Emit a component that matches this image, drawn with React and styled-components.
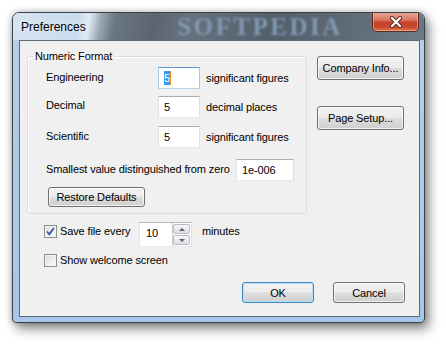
import React from "react";
import styled, { createGlobalStyle } from "styled-components";

const Global = createGlobalStyle`
  html, body {
    margin: 0;
    background: #ffffff;
  }
  body {
    font-family: "Liberation Sans", Arial, sans-serif;
    font-size: 11px;
    letter-spacing: -0.12px;
    color: #000;
  }
`;

const Page = styled.div`
  width: 446px;
  height: 344px;
  box-sizing: border-box;
  padding: 12px 0 0 12px;
  overflow: hidden;
`;

const Window = styled.div`
  width: 413px;
  height: 311px;
  box-sizing: border-box;
  border: 1px solid #3b4149;
  border-radius: 7px 7px 4px 4px;
  background: linear-gradient(180deg, #b9cfe6 0%, #acc9e8 60%, #a7c6e9 100%);
  box-shadow: 4px 6px 12px rgba(0, 0, 0, 0.45), 0 0 7px rgba(0, 0, 0, 0.25);
  display: flex;
  flex-direction: column;
  overflow: hidden;
`;

const TitleBar = styled.div`
  height: 27px;
  flex: none;
  display: flex;
  align-items: center;
  padding-left: 8px;
  background: linear-gradient(
    100deg,
    #d6e4f0 0px,
    #c8dbee 66px,
    #dfeaf4 76px,
    #9aa7b3 88px,
    #6a7681 102px,
    #5a6570 140px,
    #66727e 175px,
    #525e6a 260px,
    #5e6a76 330px,
    #6c7885 400px
  );
`;

const Title = styled.span`
  font-size: 12px;
  letter-spacing: 0;
  color: #000;
  text-shadow: 0 0 6px rgba(255, 255, 255, 0.9);
`;

const Watermark = styled.span`
  margin-left: auto;
  margin-right: 17px;
  width: 190px;
  text-align: center;
  font-family: "Liberation Serif", "Times New Roman", serif;
  font-weight: bold;
  font-size: 25px;
  line-height: 25px;
  letter-spacing: 2.5px;
  color: #8299b2;
  filter: blur(0.9px);
  white-space: nowrap;
`;

const CloseButton = styled.div`
  align-self: flex-start;
  margin-top: -1px;
  margin-right: 5px;
  width: 47px;
  height: 20px;
  box-sizing: border-box;
  border: 1px solid #5e2a22;
  border-top: none;
  border-radius: 0 0 5px 5px;
  background: linear-gradient(180deg, #e9a898 0%, #dc7a64 40%, #c8432c 55%, #c9482f 80%, #e07a52 100%);
  box-shadow: inset 0 0 0 1px rgba(255, 210, 200, 0.45);
  display: flex;
  align-items: center;
  justify-content: center;
`;

const Body = styled.div`
  flex: 1;
  display: flex;
  padding: 0 4px 5px 6px;
`;

const Client = styled.div`
  flex: 1;
  display: flex;
  flex-direction: column;
  background: #f0f0f0;
  border: 1px solid #5c6b79;
`;

const Main = styled.div`
  display: flex;
  gap: 10px;
  padding: 8px 15px 0 7px;
`;

const LeftColumn = styled.div`
  display: flex;
  flex-direction: column;
`;

const RightColumn = styled.div`
  display: flex;
  flex-direction: column;
  gap: 26px;
  padding-top: 7px;
`;

const Group = styled.fieldset`
  width: 280px;
  box-sizing: border-box;
  margin: 0;
  padding: 4px 0 6px 18px;
  border: 1px solid #d5dfe5;
  border-radius: 3px;
  box-shadow: inset 1px 1px 0 #ffffff;
  display: flex;
  flex-direction: column;
`;

const Legend = styled.legend`
  margin-left: -12px;
  padding: 0 1px;
  line-height: 14px;
`;

const Row = styled.div`
  display: flex;
  align-items: flex-start;
  height: 22px;
  margin-top: ${(p) => p.$mt || 0}px;
`;

const RowLabel = styled.span`
  width: ${(p) => p.$w}px;
  flex: none;
  padding-top: ${(p) => p.$dy}px;
  line-height: 13px;
`;

const Field = styled.div`
  width: ${(p) => p.$w}px;
  height: 22px;
  box-sizing: border-box;
  flex: none;
  background: #ffffff;
  border: 1px solid;
  border-color: ${(p) =>
    p.$focus ? "#5d95cf #a9c9e8 #b7d6ee #a9c9e8" : "#abadb3 #dbdfe6 #e3e9ef #e2e3ea"};
  padding-left: 5px;
  line-height: 20px;
`;

const Selected = styled.span`
  display: inline-block;
  background: #3399ff;
  color: #ffffff;
  line-height: 14px;
  border-right: 1px solid #f08a24;
`;

const Unit = styled.span`
  margin-left: 6px;
  line-height: 22px;
`;

const Button = styled.div`
  width: ${(p) => p.$w}px;
  height: ${(p) => p.$h}px;
  box-sizing: border-box;
  flex: none;
  border: 1px solid ${(p) => (p.$default ? "#3c86c4" : "#707070")};
  border-radius: 3px;
  background: linear-gradient(180deg, #f2f2f2 0%, #ebebeb 48%, #dddddd 52%, #cfcfcf 100%);
  box-shadow: inset 0 0 0 1px ${(p) => (p.$default ? "#b8e2f8" : "rgba(255, 255, 255, 0.75)")};
  display: flex;
  align-items: center;
  justify-content: center;
  color: #000;
`;

const RestoreButton = styled(Button)`
  margin: 6px 0 0 2px;
`;

const CheckRow = styled.div`
  display: flex;
  align-items: flex-start;
  margin: ${(p) => p.$mt}px 0 0 17px;
`;

const CheckLabel = styled.label`
  display: flex;
  align-items: center;
  gap: 3px;
  width: ${(p) => (p.$w ? `${p.$w}px` : "auto")};
  margin-top: ${(p) => p.$dy || 0}px;
  line-height: 13px;
`;

const Box = styled.span`
  width: 13px;
  height: 13px;
  box-sizing: border-box;
  flex: none;
  border: 1px solid #8e8f8f;
  background: linear-gradient(135deg, #dcdcdc 0%, #f0f0f0 60%, #fbfbfb 100%);
  box-shadow: inset 0 0 0 1px #f4f4f4;
  display: flex;
  align-items: center;
  justify-content: center;
`;

const Spin = styled.div`
  width: 53px;
  height: 25px;
  box-sizing: border-box;
  flex: none;
  display: flex;
  background: #ffffff;
  border: 1px solid;
  border-color: #b7b9be #dbdfe6 #e3e9ef #e2e3ea;
`;

const SpinText = styled.span`
  flex: 1;
  padding-left: 6px;
  line-height: 21px;
`;

const SpinButtons = styled.div`
  width: 17px;
  display: flex;
  flex-direction: column;
  gap: 1px;
  padding: 1px 1px 1px 0;
  border-left: 1px solid #c9ccd2;
`;

const SpinButton = styled.div`
  flex: 1;
  border: 1px solid #b9bcc3;
  border-radius: 2px;
  background: linear-gradient(180deg, #f7f7f7 0%, #ebebeb 50%, #dedede 100%);
  display: flex;
  align-items: center;
  justify-content: center;
`;

const Arrow = styled.span`
  width: 0;
  height: 0;
  border-left: 3px solid transparent;
  border-right: 3px solid transparent;
  ${(p) =>
    p.$up ? "border-bottom: 3px solid #4d6185;" : "border-top: 3px solid #4d6185;"}
`;

const Minutes = styled.span`
  margin: 3px 0 0 10px;
  line-height: 13px;
`;

const Footer = styled.div`
  margin-top: auto;
  display: flex;
  justify-content: flex-end;
  gap: 19px;
  padding: 0 14px 13px 0;
`;

const Check = () => (
  <svg width="11" height="11" viewBox="0 0 11 11">
    <path d="M2 5.5 L4.3 8.3 L9 2" fill="none" stroke="#3b5a96" strokeWidth="1.8" />
  </svg>
);

const CloseGlyph = () => (
  <svg width="14" height="12" viewBox="0 0 14 12">
    <path d="M3 2 L11 10 M11 2 L3 10" stroke="#5a2a22" strokeWidth="4" strokeLinecap="round" />
    <path d="M3 2 L11 10 M11 2 L3 10" stroke="#ffffff" strokeWidth="2.2" strokeLinecap="round" />
  </svg>
);

const rows = [
  { label: "Engineering", value: "5", unit: "significant figures", mt: 0, dy: 4, focus: true },
  { label: "Decimal", value: "5", unit: "decimal places", mt: 7, dy: 3 },
  { label: "Scientific", value: "5", unit: "significant figures", mt: 8, dy: 4 },
];

export default function App() {
  return (
    <Page>
      <Global />
      <Window>
        <TitleBar>
          <Title>Preferences</Title>
          <Watermark>SOFTPEDIA</Watermark>
          <CloseButton>
            <CloseGlyph />
          </CloseButton>
        </TitleBar>
        <Body>
          <Client>
            <Main>
              <LeftColumn>
                <Group>
                  <Legend>Numeric Format</Legend>
                  {rows.map((r) => (
                    <Row key={r.label} $mt={r.mt}>
                      <RowLabel $w={112} $dy={r.dy}>
                        {r.label}
                      </RowLabel>
                      <Field $w={42} $focus={r.focus}>
                        {r.focus ? <Selected>{r.value}</Selected> : r.value}
                      </Field>
                      <Unit>{r.unit}</Unit>
                    </Row>
                  ))}
                  <Row $mt={11}>
                    <RowLabel $w={190} $dy={4}>
                      Smallest value distinguished from zero
                    </RowLabel>
                    <Field $w={58}>1e-006</Field>
                  </Row>
                  <RestoreButton $w={97} $h={20}>
                    Restore Defaults
                  </RestoreButton>
                </Group>
                <CheckRow $mt={8}>
                  <CheckLabel $w={95} $dy={3}>
                    <Box>
                      <Check />
                    </Box>
                    Save file every
                  </CheckLabel>
                  <Spin>
                    <SpinText>10</SpinText>
                    <SpinButtons>
                      <SpinButton>
                        <Arrow $up />
                      </SpinButton>
                      <SpinButton>
                        <Arrow />
                      </SpinButton>
                    </SpinButtons>
                  </Spin>
                  <Minutes>minutes</Minutes>
                </CheckRow>
                <CheckRow $mt={7}>
                  <CheckLabel>
                    <Box />
                    Show welcome screen
                  </CheckLabel>
                </CheckRow>
              </LeftColumn>
              <RightColumn>
                <Button $w={87} $h={24}>
                  Company Info...
                </Button>
                <Button $w={87} $h={24}>
                  Page Setup...
                </Button>
              </RightColumn>
            </Main>
            <Footer>
              <Button $w={72} $h={21} $default>
                OK
              </Button>
              <Button $w={72} $h={21}>
                Cancel
              </Button>
            </Footer>
          </Client>
        </Body>
      </Window>
    </Page>
  );
}
